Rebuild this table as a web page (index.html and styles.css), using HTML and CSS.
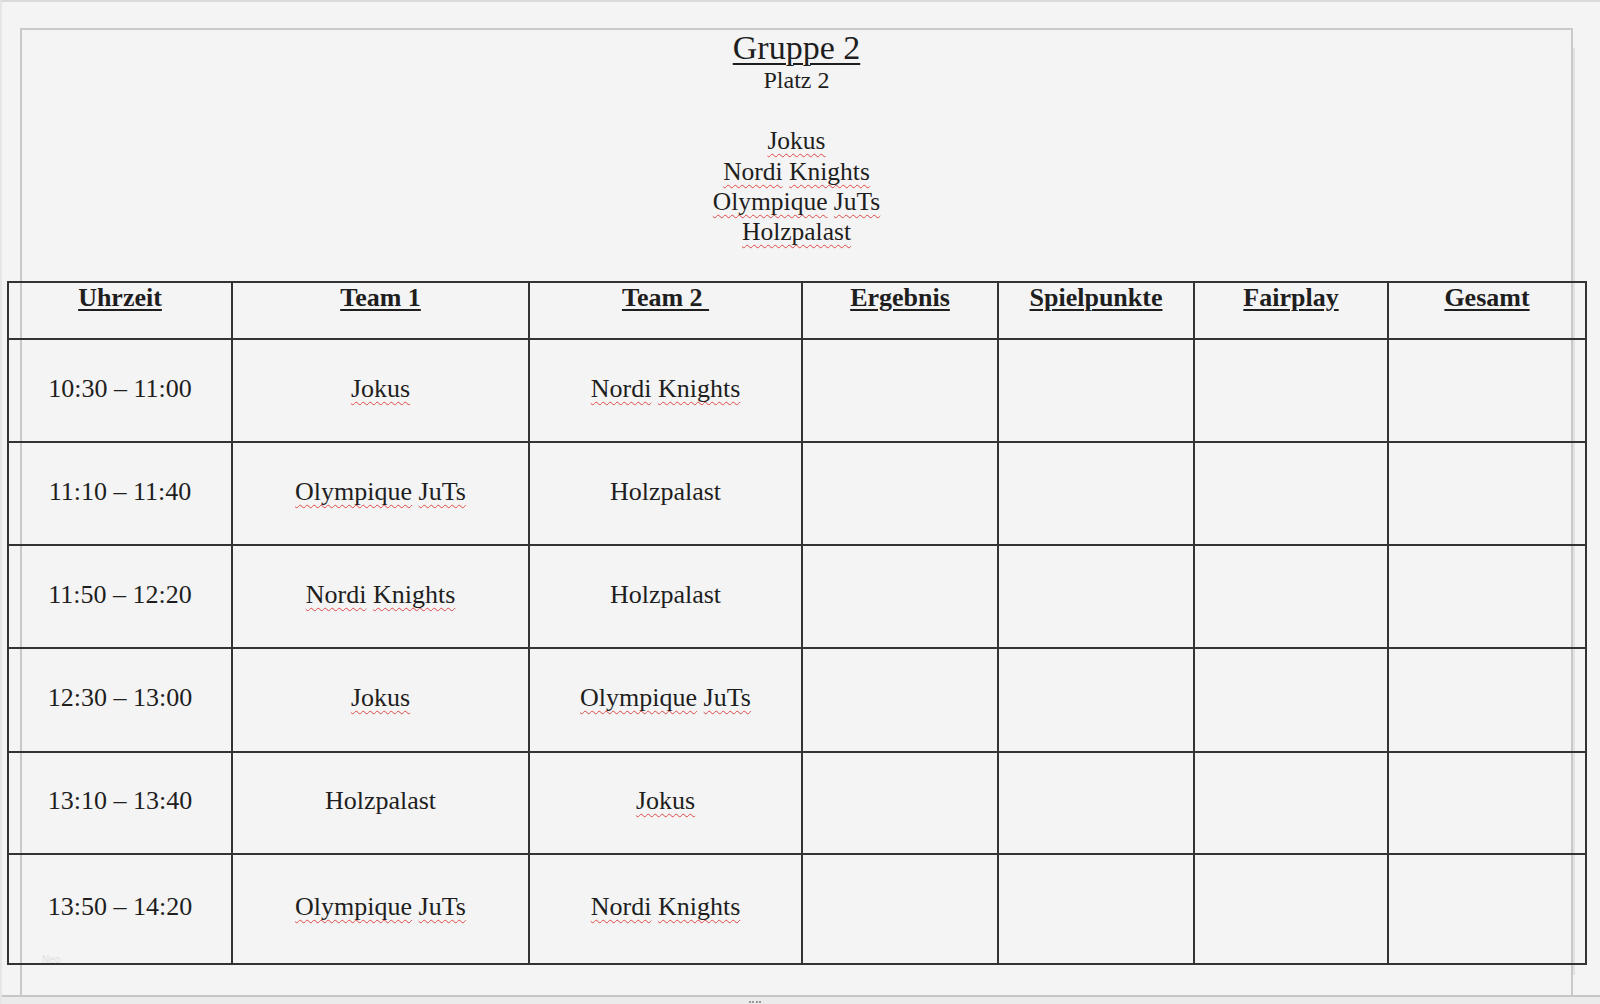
FILE: index.html
```html
<!DOCTYPE html>
<html lang="de">
<head>
<meta charset="utf-8">
<title>Gruppe 2 – Platz 2</title>
<link rel="stylesheet" href="styles.css">
</head>
<body>
<div class="window">
  <div class="page">
    <div class="heading">
      <div class="title">Gruppe 2</div>
      <div class="sub">Platz 2</div>
      <div class="blank"></div>
      <div class="team"><span class="sp">Jokus</span></div>
      <div class="team"><span class="sp">Nordi</span> <span class="sp">Knights</span></div>
      <div class="team"><span class="sp">Olympique</span> <span class="sp">JuTs</span></div>
      <div class="team"><span class="sp">Holzpalast</span></div>
    </div>
    <table class="plan">
      <colgroup>
        <col class="c-time">
        <col class="c-t1">
        <col class="c-t2">
        <col class="c-res">
        <col class="c-pts">
        <col class="c-fair">
        <col class="c-sum">
      </colgroup>
      <thead>
        <tr>
          <th><span class="u">Uhrzeit</span></th>
          <th><span class="u">Team 1</span></th>
          <th><span class="u">Team 2&nbsp;</span></th>
          <th><span class="u">Ergebnis</span></th>
          <th><span class="u">Spielpunkte</span></th>
          <th><span class="u">Fairplay</span></th>
          <th><span class="u">Gesamt</span></th>
        </tr>
      </thead>
      <tbody>
        <tr>
          <td>10:30 – 11:00</td>
          <td><span class="sp">Jokus</span></td>
          <td><span class="sp">Nordi</span> <span class="sp">Knights</span></td>
          <td></td><td></td><td></td><td></td>
        </tr>
        <tr>
          <td>11:10 – 11:40</td>
          <td><span class="sp">Olympique</span> <span class="sp">JuTs</span></td>
          <td>Holzpalast</td>
          <td></td><td></td><td></td><td></td>
        </tr>
        <tr>
          <td>11:50 – 12:20</td>
          <td><span class="sp">Nordi</span> <span class="sp">Knights</span></td>
          <td>Holzpalast</td>
          <td></td><td></td><td></td><td></td>
        </tr>
        <tr>
          <td>12:30 – 13:00</td>
          <td><span class="sp">Jokus</span></td>
          <td><span class="sp">Olympique</span> <span class="sp">JuTs</span></td>
          <td></td><td></td><td></td><td></td>
        </tr>
        <tr>
          <td>13:10 – 13:40</td>
          <td>Holzpalast</td>
          <td><span class="sp">Jokus</span></td>
          <td></td><td></td><td></td><td></td>
        </tr>
        <tr>
          <td>13:50 – 14:20</td>
          <td><span class="sp">Olympique</span> <span class="sp">JuTs</span></td>
          <td><span class="sp">Nordi</span> <span class="sp">Knights</span></td>
          <td></td><td></td><td></td><td></td>
        </tr>
      </tbody>
    </table>
  </div>
  <div class="statusbar"><span class="grip"></span></div>
  <span class="watermark">Neo</span>
</div>
</body>
</html>
```

FILE: styles.css
```css
html, body {
  margin: 0;
  padding: 0;
  background: #f4f4f4;
}

body {
  font-family: "Liberation Serif", "Times New Roman", serif;
  color: #1e1e1e;
}

.window {
  position: relative;
  width: 1600px;
  height: 1004px;
  box-sizing: border-box;
  border-top: 2px solid #dadada;
  border-left: 2px solid #e6e6e6;
  overflow: hidden;
}

.page {
  margin-top: 26px;
  margin-left: 18px;
  width: 1553px;
  height: 967px;
  box-sizing: border-box;
  border: 2px solid #c9c9c9;
  border-bottom: none;
  box-shadow: 22px 0 0 -20px #e2e2e2;
}

.heading {
  text-align: center;
}

.title {
  font-size: 34px;
  line-height: 35px;
  text-decoration: underline;
  text-decoration-thickness: 2px;
  text-underline-offset: 4px;
}

.sub {
  font-size: 24px;
  line-height: 30px;
}

.blank {
  height: 30px;
}

.team {
  font-size: 25.5px;
  line-height: 30px;
}

.team:nth-child(4) {
  line-height: 32px;
}

.sp {
  text-decoration: underline wavy #e04848;
  text-decoration-thickness: 1px;
  text-underline-offset: 4px;
  text-decoration-skip-ink: none;
}

.plan {
  margin-top: 34px;
  margin-left: -15px;
  width: 1580px;
  table-layout: fixed;
  border-collapse: separate;
  border-spacing: 0;
  border-top: 2px solid #333;
  border-left: 2px solid #333;
  font-size: 26px;
  line-height: 30px;
}

.c-time { width: 224px; }
.c-t1 { width: 297px; }
.c-t2 { width: 273px; }
.c-res { width: 196px; }
.c-pts { width: 196px; }
.c-fair { width: 194px; }
.c-sum { width: 198px; }

.plan th,
.plan td {
  box-sizing: border-box;
  padding: 0;
  border-right: 2px solid #333;
  border-bottom: 2px solid #333;
  text-align: center;
  white-space: nowrap;
}

.plan th {
  vertical-align: top;
  font-weight: bold;
  padding-top: 0;
}

.plan td {
  vertical-align: middle;
  padding-bottom: 4px;
}

.u {
  text-decoration: underline;
  text-decoration-thickness: 2px;
  text-underline-offset: 3px;
}

.plan thead tr { height: 57px; }
.plan tbody tr:nth-child(1) { height: 103px; }
.plan tbody tr:nth-child(2) { height: 103px; }
.plan tbody tr:nth-child(3) { height: 103px; }
.plan tbody tr:nth-child(4) { height: 104px; }
.plan tbody tr:nth-child(5) { height: 102px; }
.plan tbody tr:nth-child(6) { height: 110px; }

.statusbar {
  height: 9px;
  border-top: 2px solid #c6c6c6;
  background: #ebebeb;
  margin-left: -2px;
  display: flex;
  justify-content: center;
  align-items: center;
  padding-right: 90px;
}

.grip {
  width: 12px;
  height: 0;
  border-top: 2px dotted #9a9a9a;
}

.watermark {
  position: absolute;
  left: 40px;
  top: 952px;
  font-family: "Liberation Sans", sans-serif;
  font-size: 10px;
  line-height: 12px;
  color: #e0e0e0;
}
```
